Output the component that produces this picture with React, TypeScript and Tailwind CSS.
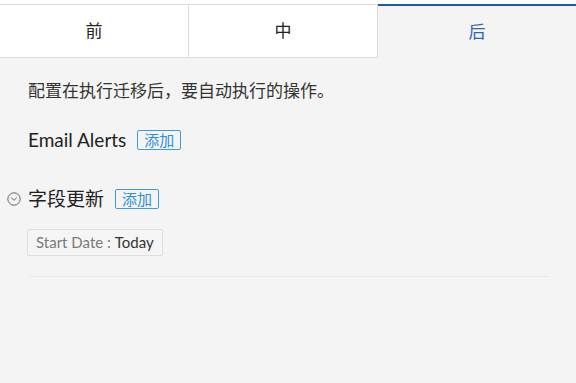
import React from 'react';

const tabs = ['前', '中', '后'];

function AddBadge() {
  return (
    <span className="ml-[11px] inline-flex h-[20px] items-center rounded-[2px] border border-[#3a9be0] px-[6px] text-[15px] leading-none text-[#2d8fd8]">
      添加
    </span>
  );
}

export default function App() {
  const active = 2;
  return (
    <div
      className="min-h-[383px] bg-white pt-[4px] text-[#222]"
      style={{ fontFamily: 'Lato, "Noto Sans CJK SC", sans-serif' }}
    >
      <div className="min-h-[379px] bg-[#f4f4f4]">
        {/* Tabs */}
        <div className="flex h-[54px]">
          {tabs.map((t, i) =>
            i === active ? (
              <div
                key={t}
                className="flex flex-1 items-center justify-center border-t-2 border-[#1f5aa6] bg-[#f4f4f4] text-[17px] text-[#2f64b0]"
              >
                {t}
              </div>
            ) : (
              <div
                key={t}
                className="flex w-[189px] items-center justify-center border-t border-b border-r border-[#dcdcdc] bg-white text-[17px] text-[#222]"
              >
                {t}
              </div>
            )
          )}
        </div>

        {/* Body */}
        <div className="pl-[28px] pr-[26px]">
          <p className="mt-[22px] text-[17px] leading-[22px] text-[#333]">配置在执行迁移后，要自动执行的操作。</p>

          <div className="mt-[25px] flex h-[26px] items-center">
            <span className="text-[19px] leading-[26px] text-[#222]">Email Alerts</span>
            <AddBadge />
          </div>

          <div className="relative mt-[33px] flex h-[26px] items-center">
            <svg
              className="absolute left-[-21px] top-[6px]"
              width="14"
              height="14"
              viewBox="0 0 14 14"
              fill="none"
              stroke="#666"
              strokeWidth="1"
            >
              <circle cx="7" cy="7" r="6.2" />
              <path d="M4.5 5.8 L7 8.3 L9.5 5.8" strokeLinecap="round" strokeLinejoin="round" />
            </svg>
            <span className="text-[19px] leading-[26px] text-[#222]">字段更新</span>
            <AddBadge />
          </div>

          <div className="ml-[-1px] mt-[17px] inline-flex h-[27px] items-center rounded-[2px] border border-[#dedede] bg-[#f5f5f5] px-[8px] text-[15px]">
            <span className="text-[#7a7a7a]">Start Date :</span>
            <span className="ml-[4px] text-[#333]">Today</span>
          </div>

          <div className="mt-[20px] h-px bg-[#e9e9e9]" />
        </div>
      </div>
    </div>
  );
}
